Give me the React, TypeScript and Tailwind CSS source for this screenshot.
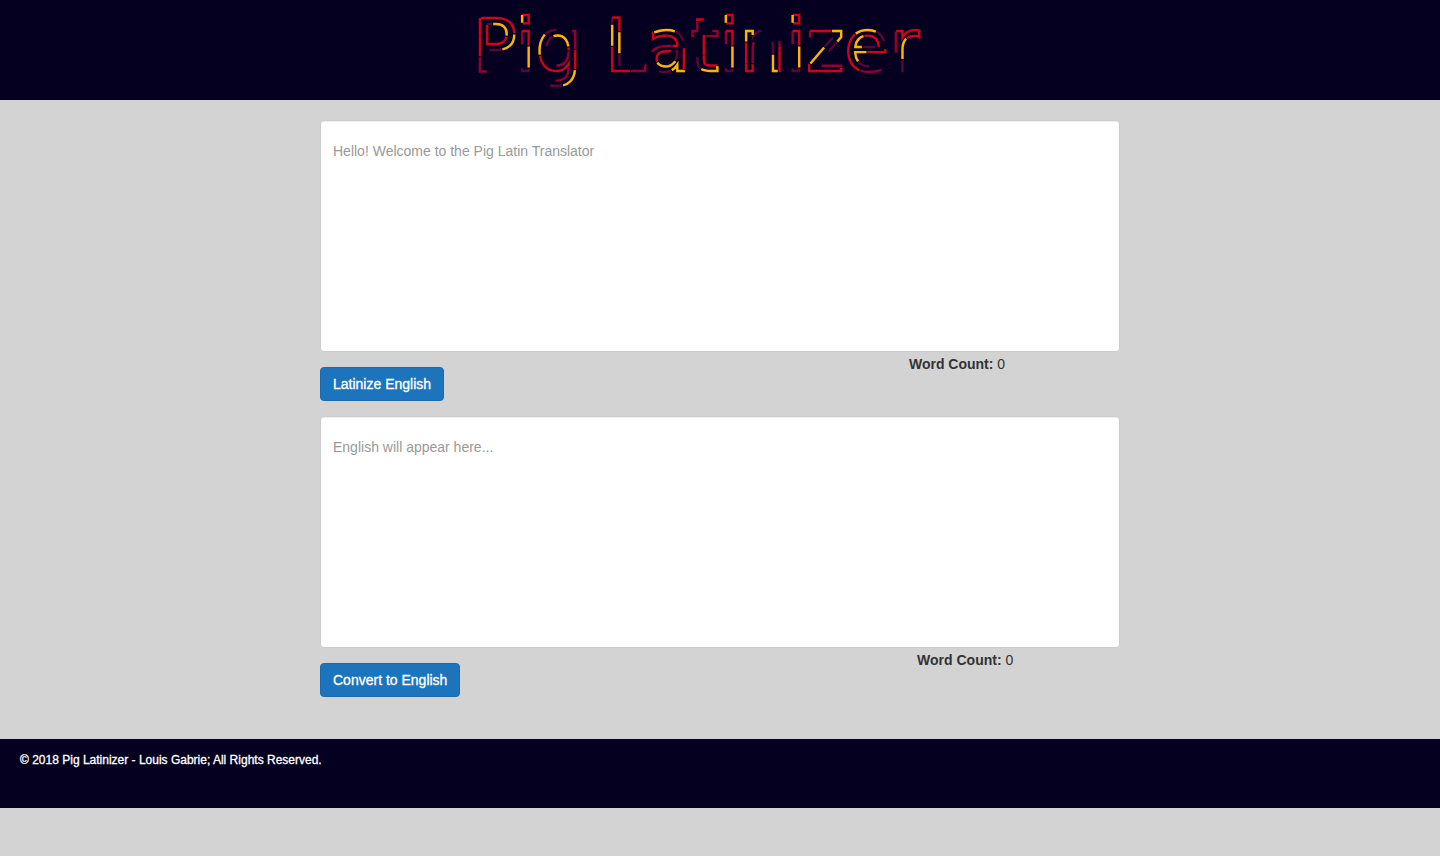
import { useState } from 'react';

const letters: { char: string; offset: number }[] = [
  { char: 'P', offset: -22 },
  { char: 'i', offset: 0 },
  { char: 'g', offset: 18 },
  { char: ' ', offset: 0 },
  { char: 'L', offset: 0 },
  { char: 'a', offset: 0 },
  { char: 't', offset: -63 },
  { char: 'i', offset: 0 },
  { char: 'n', offset: -4 },
  { char: 'i', offset: 0 },
  { char: 'z', offset: 0 },
  { char: 'e', offset: 0 },
  { char: 'r', offset: 8 },
];

const strokes = [
  { color: '#5a0538', dash: '0 44 12 67' },
  { color: '#900030', dash: '0 80 21 22' },
  { color: '#d0021b', dash: '0 102 21 0' },
  { color: '#d0021b', dash: '21 102' },
  { color: '#ffb400', dash: '0 22 21 80' },
];

function Logo() {
  return (
    <h1 className="pr-[48px]">
      <svg width="480" height="100" viewBox="0 0 480 100" role="img" aria-label="Pig Latinizer">
        <defs>
          <text
            id="wordmark"
            x="240"
            y="71"
            textAnchor="middle"
            className="font-['DejaVu_Sans',sans-serif] text-[73px]"
          >
            {letters.map((l, i) => (
              <tspan key={i} strokeDashoffset={l.offset}>
                {l.char}
              </tspan>
            ))}
          </text>
        </defs>
        {strokes.map((s, i) => (
          <use key={i} href="#wordmark" fill="none" stroke={s.color} strokeWidth="2.4" strokeDasharray={s.dash} />
        ))}
      </svg>
    </h1>
  );
}

type PanelProps = { id: string; label: string; placeholder: string; action: string };

function Panel({ id, label, placeholder, action }: PanelProps) {
  const [text, setText] = useState('');
  const count = text.split(/\s+/).filter(Boolean).length;
  return (
    <section>
      <textarea
        id={id}
        aria-label={label}
        placeholder={placeholder}
        value={text}
        onChange={(e) => setText(e.target.value)}
        className="block h-[232px] w-full resize-none rounded border border-[#ccc] bg-white px-3 py-5 leading-5 text-[#555] shadow-[inset_0_1px_1px_rgba(0,0,0,0.075)] placeholder:text-[#999]"
      />
      <div className="flex items-start">
        <button
          type="button"
          className="mt-[15px] rounded border border-[#1b69a9] bg-[#1c75bc] px-3 py-1.5 leading-5 text-white [-webkit-text-stroke:0.3px_white]"
        >
          {action}
        </button>
        <p className="flex-1 pt-0.5 pl-[350px] text-center leading-5">
          <strong>Word Count:</strong> <output htmlFor={id}>{count}</output>
        </p>
      </div>
    </section>
  );
}

export default function App() {
  return (
    <div className="min-h-screen bg-[#d3d3d3] font-['Liberation_Sans',Arial,sans-serif] text-sm text-[#333]">
      <header className="flex h-[100px] justify-center bg-[#050020]">
        <Logo />
      </header>
      <main className="mx-auto flex max-w-[800px] flex-col gap-[15px] pt-5 pb-[42px]">
        <Panel
          id="english"
          label="English text"
          placeholder="Hello! Welcome to the Pig Latin Translator"
          action="Latinize English"
        />
        <Panel
          id="latin"
          label="Pig Latin text"
          placeholder="English will appear here..."
          action="Convert to English"
        />
      </main>
      <footer className="bg-[#050020] px-5 pt-[13px] pb-[39px] text-xs leading-[17px] text-white">
        <p className="[-webkit-text-stroke:0.3px_white]">
          © 2018 Pig Latinizer - Louis Gabrie; All Rights Reserved.
        </p>
      </footer>
    </div>
  );
}
